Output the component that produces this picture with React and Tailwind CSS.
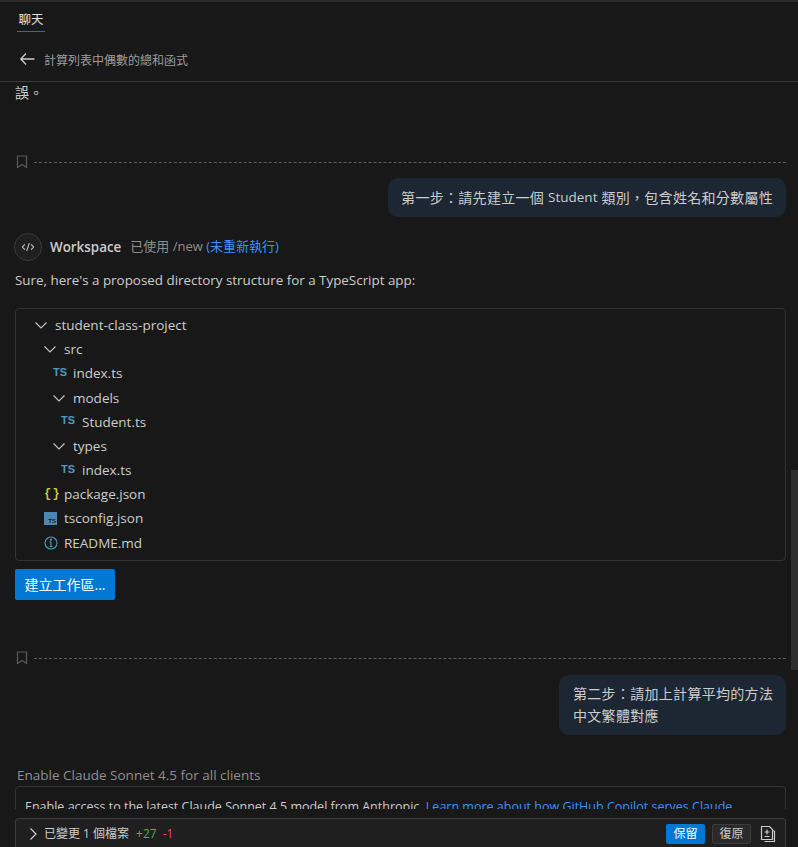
import React from "react";

function Chevron({ className = "" }) {
  return (
    <svg viewBox="0 0 16 16" className={"w-4 h-4 shrink-0 " + className} fill="none" stroke="#c5c5c5" strokeWidth="1.1">
      <path d="M2.5 5.5 8 11l5.5-5.5" />
    </svg>
  );
}

function TsIcon() {
  return <span className="w-4 shrink-0 font-['Liberation_Sans'] text-[11px] font-bold leading-none text-[#519aba] -translate-y-[1px]">TS</span>;
}

function Bookmark() {
  return (
    <svg viewBox="0 0 12 14" className="w-3 h-[14px] shrink-0" fill="none" stroke="#5a5a5a" strokeWidth="1.2">
      <path d="M1.5 1h9v11.5L6 9.5l-4.5 3z" />
    </svg>
  );
}

function Checkpoint({ className = "" }) {
  return (
    <div className={"flex items-center gap-[6px] pl-[16px] pr-[12px] h-[14px] " + className}>
      <Bookmark />
      <div className="flex-1 border-t border-dashed border-[#5c5c5c]" />
    </div>
  );
}

function Row({ pad, children }) {
  return <div className="flex items-center h-[24.2px]" style={{ paddingLeft: pad }}>{children}</div>;
}

export default function App() {
  return (
    <div className="relative w-[798px] h-[847px] overflow-hidden flex flex-col bg-[#181818] text-[#cccccc] text-[13.5px] font-['Open_Sans','Noto_Sans_CJK_TC',sans-serif] border-t-2 border-[#2b2b2b]">
      <header className="shrink-0 h-[80px] border-b border-[#3a3a3a] flex flex-col">
        <div className="pl-[17px] pt-[7px]">
          <div className="inline-block w-[28px] h-[22px] text-center border-b border-[#0078d4] text-[12.5px] leading-[19px] text-[#e0e0e0]">聊天</div>
        </div>
        <div className="flex items-center gap-[9px] pl-[19px] mt-[20px]">
          <svg viewBox="0 0 16 16" className="w-4 h-4 -translate-y-[2px]" fill="none" stroke="#cccccc" strokeWidth="1.3">
            <path d="M7 2.5 1.8 8 7 13.5M2 8h13.5" />
          </svg>
          <span className="text-[12px] text-[#9d9d9d]">計算列表中偶數的總和函式</span>
        </div>
      </header>

      <main className="flex-1 min-h-0 overflow-hidden relative">
        <div className="px-[15px] mt-[1px] h-[20px] text-[14px] leading-[20px] text-[#cccccc]">誤。</div>
        <Checkpoint className="mt-[52px]" />
        <div className="flex justify-end pr-[12px] mt-[9px]">
          <div className="h-[39px] flex items-center px-[13px] rounded-[10px] bg-[#1c2733] text-[14px] tracking-[0.3px] whitespace-pre text-[#cccccc]">第一步：請先建立一個 <span className="text-[13.5px] tracking-normal">Student</span> 類別，包含姓名和分數屬性</div>
        </div>

        <div className="flex items-center pl-[14px] mt-[16px] h-[28px]">
          <div className="w-[28px] h-[28px] rounded-full border border-[#3a3a3a] bg-[#1f1f1f] flex items-center justify-center">
            <svg viewBox="0 0 16 16" className="w-[14px] h-[14px]" fill="none" stroke="#cccccc" strokeWidth="1.2">
              <path d="M4.5 5 1.5 8l3 3M11.5 5l3 3-3 3M9.5 3.5l-3 9" />
            </svg>
          </div>
          <span className="ml-[8px] font-semibold text-[13.4px] text-[#cccccc]">Workspace</span>
          <span className="ml-[9px] text-[13px] text-[#8f8f8f]">已使用 /new <span className="text-[#3794ff]">(未重新執行)</span></span>
        </div>

        <p className="px-[15px] mt-[9px] h-[20px] leading-[20px] text-[13.4px]">Sure, here's a proposed directory structure for a TypeScript app:</p>

        <div className="mx-[15px] w-[771px] mt-[18px] h-[253px] border border-[#333333] rounded-[4px] pt-[4px]">
          <Row pad={17}><Chevron /><span className="ml-[6px]">student-class-project</span></Row>
          <Row pad={26}><Chevron /><span className="ml-[6px]">src</span></Row>
          <Row pad={37}><TsIcon /><span className="ml-[4px]">index.ts</span></Row>
          <Row pad={35}><Chevron /><span className="ml-[6px]">models</span></Row>
          <Row pad={45}><TsIcon /><span className="ml-[5px]">Student.ts</span></Row>
          <Row pad={35}><Chevron /><span className="ml-[6px]">types</span></Row>
          <Row pad={45}><TsIcon /><span className="ml-[5px]">index.ts</span></Row>
          <Row pad={28}>
            <span className="w-4 shrink-0 whitespace-pre font-['Liberation_Mono'] text-[12px] tracking-[-3px] font-bold leading-none text-[#cbcb41]">{"{ }"}</span>
            <span className="ml-[4px]">package.json</span>
          </Row>
          <Row pad={28}>
            <span className="w-[13px] h-[13px] shrink-0 bg-[#4d86b3] flex items-end justify-end pr-[1px] font-['Liberation_Sans'] font-bold text-[6px] leading-[7px] text-[#10222f]">TS</span>
            <span className="ml-[7px]">tsconfig.json</span>
          </Row>
          <Row pad={28}>
            <svg viewBox="0 0 14 14" className="w-[14px] h-[14px] shrink-0" fill="none" stroke="#519aba" strokeWidth="1.1">
              <circle cx="7" cy="7" r="6" />
              <path d="M7 6v4.5M5.5 6H7M5.5 10.5h3" />
              <circle cx="7" cy="3.8" r="0.6" fill="#519aba" />
            </svg>
            <span className="ml-[6px]">README.md</span>
          </Row>
        </div>

        <button className="block ml-[15px] mt-[8px] w-[100px] h-[31px] rounded-[2px] bg-[#0078d4] text-white text-[14px]">建立工作區...</button>

        <Checkpoint className="mt-[51px]" />

        <div className="flex justify-end pr-[12px] mt-[10px]">
          <div className="w-[227px] h-[60px] pl-[14px] pt-[8px] rounded-[10px] bg-[#1c2733] text-[14px] tracking-[0.3px] leading-[22px] text-[#cccccc]">
            <div>第二步：請加上計算平均的方法</div>
            <div>中文繁體對應</div>
          </div>
        </div>

        <div className="pl-[17px] mt-[30px] h-[20px] leading-[20px] text-[13.5px] text-[#8f8f8f]">Enable Claude Sonnet 4.5 for all clients</div>
        <div className="mx-[15px] w-[771px] mt-[1px] h-[60px] border border-[#333333] rounded-[4px] pl-[9px] pt-[11px] text-[12.5px] whitespace-nowrap overflow-hidden">
          Enable access to the latest Claude Sonnet 4.5 model from Anthropic. <span className="text-[#3794ff]">Learn more about how GitHub Copilot serves Claude</span>
        </div>

        <div className="absolute left-[791px] top-[388px] w-[7px] h-[200px] bg-[#2f2f2f]" />

        <div className="absolute left-0 right-0 bottom-0 h-[38px] bg-[#181818]">
          <div className="absolute left-[15px] top-[9px] w-[771px] h-[29px] border border-b-0 border-[#3c3c3c] rounded-t-[4px] bg-[#1f1f1f] flex items-center pl-[9px] pr-[8px] pt-[2px] text-[12px]">
            <svg viewBox="0 0 16 16" className="w-4 h-4 shrink-0" fill="none" stroke="#cccccc" strokeWidth="1.2">
              <path d="M5.5 2.5 11 8l-5.5 5.5" />
            </svg>
            <span className="ml-[3px] text-[#cccccc]">已變更 1 個檔案</span>
            <span className="ml-[7px] text-[#3fb950]">+27</span>
            <span className="ml-[6px] text-[#f14c4c]">-1</span>
            <div className="ml-auto flex items-center gap-[7px]">
              <span className="w-[39px] h-[20px] rounded-[2px] bg-[#0078d4] text-white flex items-center justify-center">保留</span>
              <span className="w-[39px] h-[20px] rounded-[2px] bg-[#2a2a2a] border border-[#3c3c3c] text-[#cccccc] flex items-center justify-center">復原</span>
              <svg viewBox="0 0 18 18" className="w-[18px] h-[18px] ml-[1px]" fill="none" stroke="#cccccc" strokeWidth="1.2">
                <path d="M2.5 1.5h8l3 3v10h-11z" />
                <path d="M14.5 5.5l1 1v10h-10" />
                <path d="M8 4.5v5M5.5 7h5M5.5 11.5h5" />
              </svg>
            </div>
          </div>
        </div>
      </main>
    </div>
  );
}
